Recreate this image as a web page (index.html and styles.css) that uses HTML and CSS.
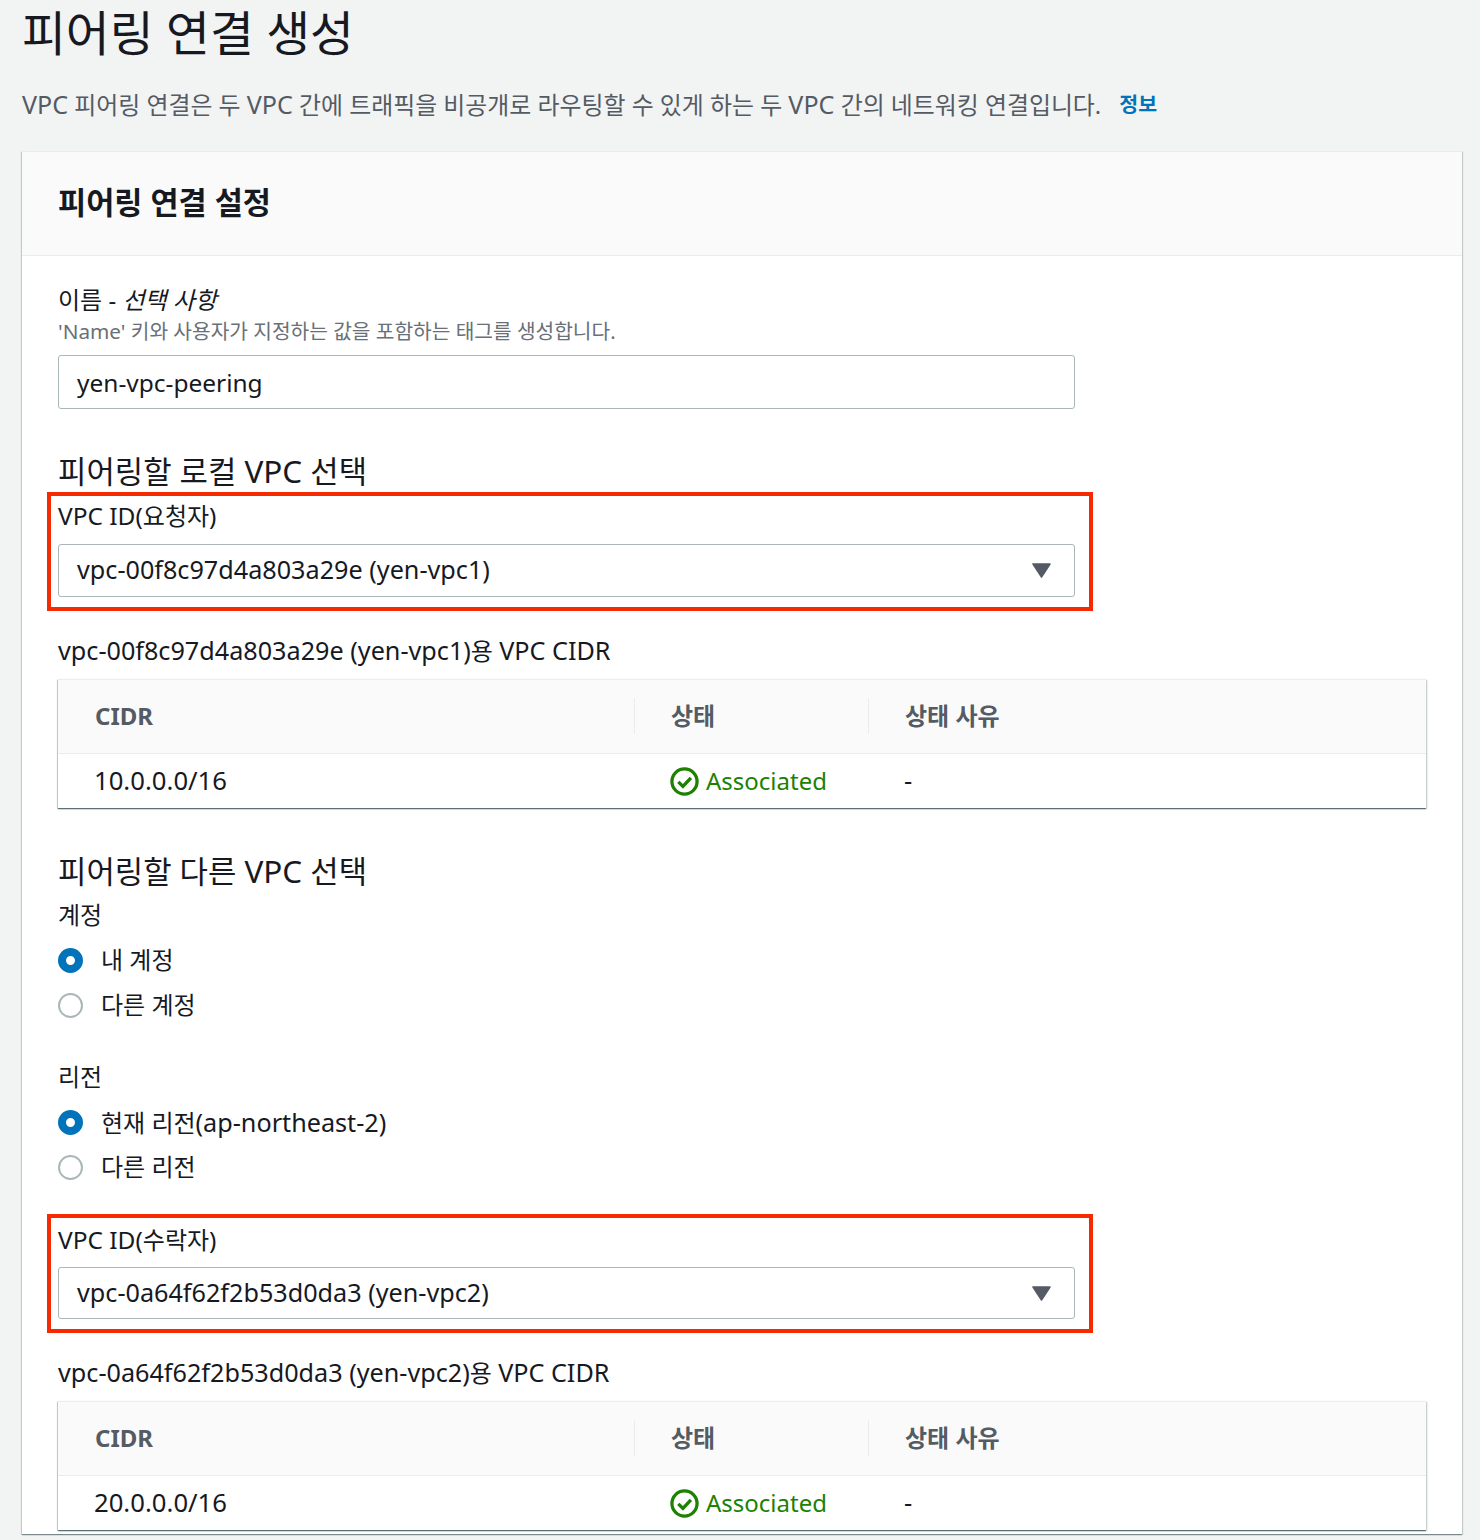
FILE: index.html
```html
<!DOCTYPE html>
<html lang="ko">
<head>
<meta charset="utf-8">
<title>피어링 연결 생성</title>
<link rel="stylesheet" href="styles.css">
</head>
<body>
<main class="page">
  <h1 class="title">피어링 연결 생성</h1>
  <p class="intro"><span><span class="id">VPC</span> 피어링 연결은 두 <span class="id">VPC</span> 간에 트래픽을 비공개로 라우팅할 수 있게 하는 두 <span class="id">VPC</span> 간의 네트워킹 연결입니다.</span><a class="info" href="#">정보</a></p>
  <section class="card">
    <header class="card-head"><h2>피어링 연결 설정</h2></header>
    <div class="card-body">
      <div class="label">이름 - <i>선택 사항</i></div>
      <div class="desc"><span class="en">'Name'</span> 키와 사용자가 지정하는 값을 포함하는 태그를 생성합니다.</div>
      <div class="control text-input"><span class="en">yen-vpc-peering</span></div>

      <h3 class="sub sub-first">피어링할 로컬 <span class="en">VPC</span> 선택</h3>
      <div class="mark">
        <div class="label"><span class="en">VPC ID(</span>요청자<span class="en">)</span></div>
        <div class="control select"><span class="id">vpc-00f8c97d4a803a29e (yen-vpc1)</span><svg class="caret" viewBox="0 0 19 15"><path d="M1 1h17L9.5 14z" fill="#545b64" stroke="#545b64" stroke-width="1.5" stroke-linejoin="round"/></svg></div>
      </div>
      <div class="label cidr-label"><span class="id">vpc-00f8c97d4a803a29e (yen-vpc1)</span>용 <span class="id">VPC CIDR</span></div>
      <div class="table">
        <div class="row head">
          <div class="cell c1">CIDR</div>
          <div class="cell c2">상태</div>
          <div class="cell c3">상태 사유</div>
        </div>
        <div class="row">
          <div class="cell c1"><span class="num">10.0.0.0/16</span></div>
          <div class="cell c2 ok"><svg class="check" viewBox="0 0 30 30"><circle cx="15" cy="15" r="13" fill="none" stroke="#1d8102" stroke-width="3.4"/><path d="M8.6 15.3l4.8 4.8 8.2-8.8" fill="none" stroke="#1d8102" stroke-width="3.4"/></svg><span>Associated</span></div>
          <div class="cell c3"><span class="num">-</span></div>
        </div>
      </div>

      <h3 class="sub sub-second">피어링할 다른 <span class="en">VPC</span> 선택</h3>
      <div class="label group-label">계정</div>
      <div class="radio-group">
        <div class="radio"><span class="dot on"></span>내 계정</div>
        <div class="radio"><span class="dot"></span>다른 계정</div>
      </div>
      <div class="label group-label region">리전</div>
      <div class="radio-group">
        <div class="radio"><span class="dot on"></span><span>현재 리전<span class="id">(ap-northeast-2)</span></span></div>
        <div class="radio"><span class="dot"></span>다른 리전</div>
      </div>
      <div class="mark mark-second">
        <div class="label"><span class="en">VPC ID(</span>수락자<span class="en">)</span></div>
        <div class="control select"><span class="id">vpc-0a64f62f2b53d0da3 (yen-vpc2)</span><svg class="caret" viewBox="0 0 19 15"><path d="M1 1h17L9.5 14z" fill="#545b64" stroke="#545b64" stroke-width="1.5" stroke-linejoin="round"/></svg></div>
      </div>
      <div class="label cidr-label"><span class="id">vpc-0a64f62f2b53d0da3 (yen-vpc2)</span>용 <span class="id">VPC CIDR</span></div>
      <div class="table">
        <div class="row head">
          <div class="cell c1">CIDR</div>
          <div class="cell c2">상태</div>
          <div class="cell c3">상태 사유</div>
        </div>
        <div class="row">
          <div class="cell c1"><span class="num">20.0.0.0/16</span></div>
          <div class="cell c2 ok"><svg class="check" viewBox="0 0 30 30"><circle cx="15" cy="15" r="13" fill="none" stroke="#1d8102" stroke-width="3.4"/><path d="M8.6 15.3l4.8 4.8 8.2-8.8" fill="none" stroke="#1d8102" stroke-width="3.4"/></svg><span>Associated</span></div>
          <div class="cell c3"><span class="num">-</span></div>
        </div>
      </div>
    </div>
  </section>
</main>
</body>
</html>
```

FILE: styles.css
```css
* { box-sizing: border-box; }
html, body { margin: 0; height: 1540px; overflow: hidden; }
body {
  background: #f2f3f3;
  color: #16191f;
  font-family: "Noto Sans", "Noto Sans CJK KR", sans-serif;
  font-size: 24px;
  line-height: 36px;
}
.en { font-size: 1.02em; }
.id { font-size: 1.05em; }
.num { font-size: 1.07em; }
.page { padding: 0 18px 0 22px; }
.title {
  margin: 0;
  height: 64px;
  padding-top: 1px;
  font-size: 47.7px;
  line-height: 64px;
  font-weight: 400;
  color: #16191f;
}
.intro {
  margin: 22px 0 0;
  height: 65px;
  display: flex;
  align-items: flex-start;
  font-size: 23.9px;
  line-height: 36px;
  color: #545b64;
}
.info {
  margin-left: 18px;
  font-size: 20.57px;
  font-weight: 700;
  color: #0073bb;
  text-decoration: none;
}
.card {
  width: 1440px;
  height: 1383px;
  background: #fff;
  box-shadow: 0 1px 1px 0 rgba(0,28,36,.3), 1px 1px 1px 0 rgba(0,28,36,.15), -1px 1px 1px 0 rgba(0,28,36,.15);
  border-top: 1px solid #eaeded;
}
.card-head {
  height: 104px;
  padding: 0 36px 3px;
  display: flex;
  align-items: center;
  background: #fafafa;
  border-bottom: 1px solid #eaeded;
}
.card-head h2 { margin: 0; font-size: 30.6px; line-height: 44px; font-weight: 700; }
.card-body { padding: 26px 36px 0; }
.label { height: 36px; line-height: 36px; }
.label i { font-style: italic; }
.desc { height: 26px; font-size: 20.3px; line-height: 26px; color: #687078; }
.control {
  width: 1017px;
  height: 54px;
  margin-top: 11px;
  padding: 0 18px;
  display: flex;
  align-items: center;
  justify-content: space-between;
  background: #fff;
  border: 1px solid #aab7b8;
  border-radius: 3px;
}
.control.text-input { padding-top: 1px; }
.control.select { padding-bottom: 3px; }
.caret { width: 19px; height: 15px; margin: 3px 5px 0 0; }
.sub { margin: 0; height: 43px; font-size: 30.86px; line-height: 43px; font-weight: 400; }
.sub-first { margin-top: 40px; }
.sub-second { margin-top: 41px; }
.mark {
  width: 1046px;
  height: 119px;
  margin-left: -11px;
  padding: 2px 7px 0;
  border: 4px solid #f52a00;
}
.mark .control { height: 53px; margin-top: 10px; }
.mark-second { margin-top: 24px; padding-top: 4px; }
.mark-second .control { height: 52px; margin-top: 9px; }
.cidr-label { margin-top: 21px; }
.table {
  width: 1368px;
  height: 129px;
  margin-top: 11px;
  background: #fff;
  border-top: 1px solid #eaeded;
  box-shadow: 0 1px 1px 0 rgba(0,28,36,.5), 1px 1px 2px 0 rgba(0,28,36,.2), -1px 1px 1px 0 rgba(0,28,36,.15);
}
.row { height: 54px; display: flex; align-items: center; }
.row.head {
  height: 74px;
  padding-bottom: 2px;
  background: #fafafa;
  border-bottom: 1px solid #eaeded;
  font-weight: 700;
  color: #545b64;
}
.cell { height: 36px; display: flex; align-items: center; padding-left: 36px; }
.c1 { width: 576px; }
.head .c1 { padding-left: 37px; }
.c2 { width: 234px; }
.c3 { flex: 1; }
.head .c2, .head .c3 { border-left: 1px solid #eaeded; }
.ok { color: #1d8102; }
.check { width: 29px; height: 29px; margin-right: 7px; flex: none; }
.group-label { margin-top: 5px; }
.group-label.region { margin-top: 31px; }
.radio-group { margin-top: 5px; }
.radio { height: 45px; padding-bottom: 1px; display: flex; align-items: center; }
.dot {
  width: 25px;
  height: 25px;
  margin-right: 18px;
  border-radius: 50%;
  border: 2px solid #aab7b8;
  background: #fff;
}
.dot.on { border: 8px solid #0073bb; }
```
